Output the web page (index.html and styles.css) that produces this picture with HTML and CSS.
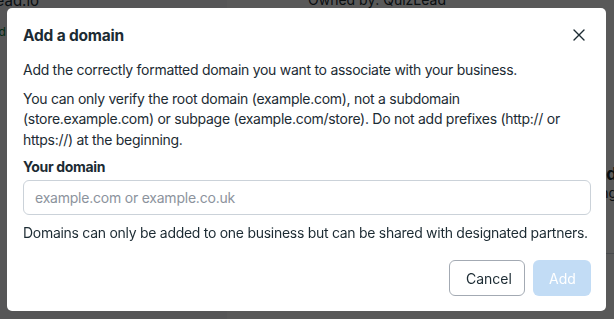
FILE: index.html
```html
<!DOCTYPE html>
<html lang="en">
<head>
    <meta charset="UTF-8">
    <meta name="viewport" content="width=device-width, initial-scale=1.0">
    <title>Add a domain</title>
    <link rel="stylesheet" href="styles.css">
</head>
<body>
    <div class="page">
        <div class="sidebar">
            <div class="site-name">quizlead.io</div>
            <div class="site-status">Verified</div>
        </div>
        <div class="main">
            <div class="owner">Owned by: QuizLead</div>
            <div class="side-card">
                <div class="side-title">Domain verified</div>
                <div class="side-sub">Pending</div>
            </div>
        </div>
    </div>

    <div class="overlay">
        <div class="modal">
            <div class="modal-header">
                <h2 class="modal-title">Add a domain</h2>
                <button class="close-btn" aria-label="Close">
                    <svg width="12" height="12" viewBox="0 0 12 12">
                        <path d="M1 1 L11 11 M11 1 L1 11" stroke="#1c2b33" stroke-width="1.4" stroke-linecap="round"/>
                    </svg>
                </button>
            </div>
            <div class="modal-body">
                <p>Add the correctly formatted domain you want to associate with your business.</p>
                <p>You can only verify the root domain (example.com), not a subdomain (store.example.com) or subpage (example.com/store). Do not add prefixes (http:// or https://) at the beginning.</p>
                <label class="field-label" for="domain">Your domain</label>
                <input class="field-input" id="domain" type="text" placeholder="example.com or example.co.uk">
                <p class="hint">Domains can only be added to one business but can be shared with designated partners.</p>
            </div>
            <div class="modal-footer">
                <button class="btn btn-secondary">Cancel</button>
                <button class="btn btn-primary" disabled>Add</button>
            </div>
        </div>
    </div>
</body>
</html>
```

FILE: styles.css
```css
* { box-sizing: border-box; }
body {
    margin: 0;
    background-color: #ffffff;
    color: #1c2b33;
    font-family: "Inter", "Roboto", sans-serif;
    overflow: hidden;
}

/* Page underneath the dialog */
.page {
    display: flex;
    height: 319px;
}
.sidebar {
    width: 227px;
    background-color: #f5f6f8;
}
.site-name {
    font-size: 15px;
    margin-top: -9px;
    margin-left: -38px;
}
.site-status {
    font-size: 12px;
    color: #0b7a3b;
    margin-top: 14px;
    margin-left: -38px;
}
.main {
    flex: 1;
}
.owner {
    font-size: 14px;
    margin-top: -9px;
    margin-left: 81px;
}
.side-card {
    margin-top: 156px;
    margin-right: -3px;
    text-align: right;
    border-bottom: 1px solid #cbd2d9;
    padding-bottom: 52px;
}
.side-title {
    font-size: 17px;
    font-weight: 700;
}
.side-sub {
    font-size: 14px;
}

/* Dialog */
.overlay {
    position: fixed;
    top: 0; right: 0; bottom: 0; left: 0;
    background-color: rgba(0, 0, 0, 0.65);
    display: flex;
    align-items: flex-start;
    padding: 8px 0 0 7px;
}
.modal {
    width: 599px;
    height: 303px;
    background-color: #ffffff;
    border-radius: 5px;
    display: flex;
    flex-direction: column;
}
.modal-header {
    flex-shrink: 0;
    display: flex;
    align-items: center;
    justify-content: space-between;
    padding: 2px 16px 0 16px;
    height: 52px;
}
.modal-title {
    margin: 0;
    font-size: 15.5px;
    font-weight: 700;
    letter-spacing: -0.2px;
}
.close-btn {
    background: transparent;
    border: none;
    padding: 0;
    margin-right: 5px;
    width: 12px;
    height: 12px;
    display: flex;
    cursor: pointer;
}
.modal-body {
    flex-shrink: 0;
    padding: 0 15px 0 16px;
    font-size: 14px;
    line-height: 20.5px;
    letter-spacing: -0.28px;
}
.modal-body p {
    margin: 0 0 8px 0;
}
.field-label {
    display: block;
    font-weight: 700;
    margin-top: -1px;
    letter-spacing: -0.35px;
}
.field-input {
    display: block;
    width: 100%;
    height: 35px;
    margin-top: 2px;
    border: 1px solid #cbd2d9;
    border-radius: 6px;
    padding: 0 11px;
    font-family: inherit;
    font-size: 14px;
    letter-spacing: -0.22px;
    color: #1c2b33;
}
.field-input::placeholder {
    color: #8c939d;
}
.modal-body .hint {
    margin-top: 8px;
}
.modal-footer {
    flex-shrink: 0;
    display: flex;
    justify-content: flex-end;
    gap: 8px;
    padding: 9px 15px 0 0;
}
.btn {
    height: 36px;
    border-radius: 6px;
    font-family: inherit;
    font-size: 14px;
    padding: 0 16px;
}
.btn-secondary {
    width: 76px;
    background-color: #ffffff;
    border: 1px solid #a3aab3;
    color: #1c2b33;
}
.btn-primary {
    width: 58px;
    background-color: #c2dcf5;
    border: none;
    color: #ffffff;
}
```
